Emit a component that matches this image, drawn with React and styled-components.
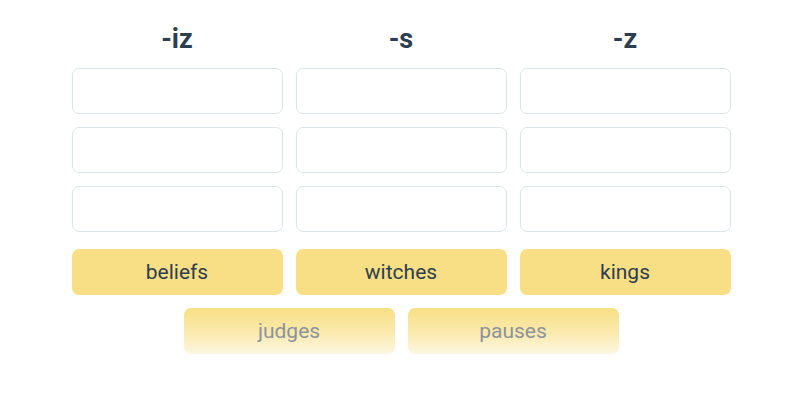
import styled, { createGlobalStyle } from "styled-components";

const GlobalStyle = createGlobalStyle`
  body {
    margin: 0;
    background: #ffffff;
    font-family: Roboto, "Liberation Sans", sans-serif;
  }
`;

const Container = styled.div`
  width: 800px;
  height: 400px;
  display: flex;
  flex-direction: column;
  align-items: center;
  padding: 22px 0 0 2px;
  box-sizing: border-box;
`;

const Grid = styled.div`
  display: grid;
  grid-template-columns: repeat(3, 211px);
  column-gap: 13px;
  row-gap: 13px;
`;

const Heading = styled.h2`
  margin: 0 0 -1px;
  height: 34px;
  text-align: center;
  font-size: 27px;
  font-weight: 700;
  color: #2c3e50;
  line-height: 34px;
`;

const Slot = styled.div`
  height: 44px;
  border: 1px solid #dce3ea;
  border-radius: 7px;
  background: #ffffff;
`;

const Word = styled.div`
  height: 46px;
  border-radius: 7px;
  display: flex;
  align-items: center;
  justify-content: center;
  font-size: 21px;
  color: ${(p) => (p.$faded ? "#8c939b" : "#2e3d4d")};
  background: ${(p) =>
    p.$faded
      ? "linear-gradient(180deg, #f8df85 0%, #faeaae 55%, #fdf7e2 100%)"
      : "#f8df85"};
`;

const PlacedWord = styled(Word)`
  margin-top: 4px;
`;

const Tray = styled.div`
  display: grid;
  grid-template-columns: repeat(2, 211px);
  column-gap: 13px;
  margin-top: 13px;
`;

const headings = ["-iz", "-s", "-z"];
const placed = ["beliefs", "witches", "kings"];
const remaining = ["judges", "pauses"];

const App = () => {
  return (
    <>
      <GlobalStyle />
      <Container>
        <Grid>
          {headings.map((h) => (
            <Heading key={h}>{h}</Heading>
          ))}
          {Array.from({ length: 9 }).map((_, i) => (
            <Slot key={i} />
          ))}
          {placed.map((w) => (
            <PlacedWord key={w}>{w}</PlacedWord>
          ))}
        </Grid>
        <Tray>
          {remaining.map((w) => (
            <Word key={w} $faded>
              {w}
            </Word>
          ))}
        </Tray>
      </Container>
    </>
  );
};

export default App;
